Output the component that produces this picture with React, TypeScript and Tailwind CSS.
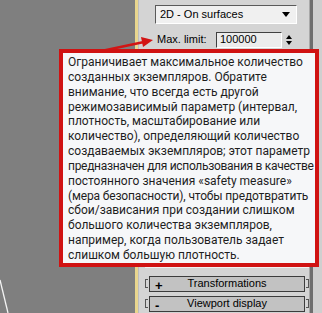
import React from "react";

const lines: [string, string][] = [
  ["Ограничивает максимальное количество", ""],
  ["созданных экземпляров. Обратите", ""],
  ["внимание, что всегда есть другой", ""],
  ["режимозависимый параметр (интервал,", ""],
  ["плотность, масштабирование или", ""],
  ["количество), определяющий количество", ""],
  ["создаваемых экземпляров; этот параметр", ""],
  ["предназначен для использования в качестве", "tracking-[-0.3px]"],
  ["постоянного значения «safety measure»", ""],
  ["(мера безопасности), чтобы предотвратить", "tracking-[-0.15px]"],
  ["сбои/зависания при создании слишком", ""],
  ["большого количества экземпляров,", ""],
  ["например, когда пользователь задает", ""],
  ["слишком большую плотность.", ""],
];

const Rollout = ({ sign, label }: { sign: string; label: string }) => (
  <div className="flex items-center h-[16px] ml-[6px] mb-[4px]">
    <span className="w-[3px] h-[9px] border-l border-t border-b border-[#555] mr-[1px]" />
    <div className="relative w-[157px] h-[16px] bg-[#c2c2c2] border border-[#3c3c3c] flex items-center justify-center text-[11px] text-black">
      <span className="absolute left-[5px] top-[-1px] text-[13px] font-bold">{sign}</span>
      {label}
    </div>
    <span className="w-[3px] h-[9px] border-r border-t border-b border-[#555] ml-[1px]" />
  </div>
);

export default function App() {
  return (
    <div
      className="relative w-[322px] h-[313px] overflow-hidden flex bg-[#7f7f7f]"
      style={{ fontFamily: '"Liberation Sans", Arial, sans-serif' }}
    >
      {/* viewport */}
      <div className="w-[135px] shrink-0 relative">
        <svg className="absolute left-0 top-0" width="135" height="313">
          <line x1="0" y1="280" x2="8" y2="313" stroke="#f4f4f4" strokeWidth="1.3" />
        </svg>
      </div>
      <div className="w-[3px] shrink-0 bg-[#e9d68e]" />
      <div className="w-px shrink-0 bg-[#bdbdbd]" />

      {/* command panel */}
      <div className="w-[170px] shrink-0 bg-[#d4d4d4] flex flex-col pt-[5px]">
        <div className="ml-[16px] w-[142px] h-[21px] bg-[#f0f0f0] border border-t-[#5a5a5a] border-l-[#5a5a5a] border-r-[#ffffff] border-b-[#ffffff] flex items-center px-[4px] text-[11px] text-black">
          <span className="flex-1">2D - On surfaces</span>
          <span className="w-0 h-0 border-l-[4px] border-r-[4px] border-t-[5px] border-l-transparent border-r-transparent border-t-black mr-[2px]" />
        </div>

        <div className="flex items-center mt-[8px] ml-[18px] h-[16px] text-[11px] text-black">
          <span className="w-[59px]">Max. limit:</span>
          <div className="w-[66px] h-[16px] bg-[#ececec] border border-t-[#404040] border-l-[#404040] border-r-[#fff] border-b-[#fff] flex items-center px-[3px]">
            100000
          </div>
          <div className="ml-[2px] w-[9px] h-[16px] flex flex-col justify-center items-center gap-[2px]">
            <span className="w-0 h-0 border-l-[3px] border-r-[3px] border-b-[4px] border-l-transparent border-r-transparent border-b-black" />
            <span className="w-0 h-0 border-l-[3px] border-r-[3px] border-t-[4px] border-l-transparent border-r-transparent border-t-black" />
          </div>
        </div>

        <div className="shrink-0 h-[213px] ml-[6px] w-[164px] mt-[6px] border-l border-r border-b border-[#8c8c8c] shadow-[0_1px_0_#f2f2f2]" />

        <div className="mt-[9px]">
          <Rollout sign="+" label="Transformations" />
          <Rollout sign="-" label="Viewport display" />
        </div>
      </div>

      <div className="w-px shrink-0 bg-[#a8a8a8]" />
      <div className="w-[3px] shrink-0 bg-[#6e6e6e]" />
      <div className="flex-1 bg-[#cfcfcf]" />

      {/* annotation arrow */}
      <svg className="absolute left-0 top-0 pointer-events-none" width="322" height="313">
        <line x1="92" y1="53" x2="144" y2="42" stroke="#d31414" strokeWidth="2.5" />
        <polygon points="153,40 141,37 143,47" fill="#d31414" />
      </svg>

      {/* annotation box */}
      <div
        className="absolute left-[59px] top-[49px] w-[260px] h-[218px] border-[4px] border-[#d01212] bg-[#f6f7f9] pl-[5px] pt-[2px] text-[12px] leading-[14.85px] text-[#1e1e1e] whitespace-nowrap"
        style={{ fontFamily: 'Roboto, "Noto Sans", sans-serif' }}
      >
        {lines.map(([l, cls]) => (
          <div key={l} className={cls}>
            {l}
          </div>
        ))}
      </div>
    </div>
  );
}
